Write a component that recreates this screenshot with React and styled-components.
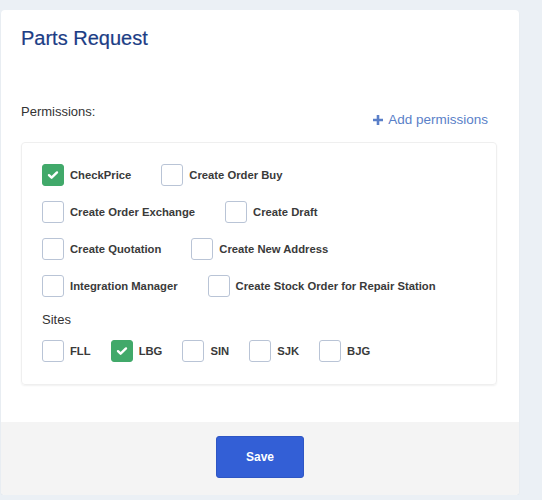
import React, { useState } from "react";
import styled, { createGlobalStyle } from "styled-components";

const GlobalStyle = createGlobalStyle`
    body {
        margin: 0;
        background-color: #ebf0f5;
        font-family: "Liberation Sans", Arial, sans-serif;
    }
`;

const Pagina = styled.div`
    padding: 10px 0 0 1px;
`;

const Cartao = styled.div`
    width: 518px;
    height: 485px;
    background-color: white;
    border-radius: 4px;
    display: flex;
    flex-direction: column;
    box-shadow: 0 1px 2px rgba(0, 0, 0, 0.06);
    overflow: hidden;
`;

const Cabecalho = styled.div`
    padding: 17px 20px 0;
`;

const Titulo = styled.h2`
    margin: 0;
    font-size: 20px;
    line-height: 23px;
    font-weight: 400;
    color: #1b3d85;
    -webkit-text-stroke: 0.2px #1b3d85;
`;

const Corpo = styled.div`
    padding: 54px 22px 0 20px;
`;

const LinhaPermissoes = styled.div`
    display: flex;
    justify-content: space-between;
    align-items: flex-start;
`;

const Rotulo = styled.div`
    font-size: 13px;
    line-height: 15px;
    color: #333;
    margin-top: ${(p) => p.$top || 0}px;
`;

const BotaoAdicionar = styled.button`
    display: flex;
    align-items: center;
    gap: 5px;
    margin-top: 8px;
    margin-right: 9px;
    padding: 0;
    border: none;
    background: transparent;
    font-family: inherit;
    font-size: 13.5px;
    line-height: 16px;
    color: #5a7fc8;
    cursor: pointer;
`;

const Caixa = styled.div`
    margin-top: 14px;
    border: 1px solid #efefef;
    border-radius: 4px;
    box-shadow: 0 1px 2px rgba(0, 0, 0, 0.06);
    padding: 21px 20px 22px;
`;

const Linhas = styled.div`
    display: flex;
    flex-direction: column;
    gap: 15px;
`;

const Linha = styled.div`
    display: flex;
    align-items: center;
    gap: ${(p) => p.$gap}px;
    margin-top: ${(p) => p.$top || 0}px;
`;

const Opcao = styled.label`
    display: flex;
    align-items: center;
    gap: 6px;
    font-size: 11.25px;
    font-weight: 700;
    color: #3a3a3a;
    cursor: pointer;
`;

const Quadrado = styled.span`
    width: 22px;
    height: 22px;
    box-sizing: border-box;
    border-radius: 3px;
    border: 1px solid ${(p) => (p.$marcado ? "#41a96a" : "#b9c4d6")};
    background-color: ${(p) => (p.$marcado ? "#41a96a" : "white")};
    display: flex;
    align-items: center;
    justify-content: center;
`;

const Rodape = styled.div`
    margin-top: auto;
    height: 73px;
    box-sizing: border-box;
    background-color: #f4f4f4;
    padding-top: 14px;
    display: flex;
    justify-content: center;
    align-items: flex-start;
`;

const BotaoSalvar = styled.button`
    width: 88px;
    height: 42px;
    border: 1px solid #2e56c4;
    border-radius: 3px;
    background-color: #335fd6;
    color: white;
    font-family: inherit;
    font-size: 12px;
    font-weight: 700;
    cursor: pointer;
`;

const Check = ({ marcado, onClick, texto }) => (
    <Opcao onClick={onClick}>
        <Quadrado $marcado={marcado}>
            {marcado && (
                <svg width="12" height="12" viewBox="0 0 12 12">
                    <path d="M2 6.2l2.6 2.5L10 3.4" fill="none" stroke="white" strokeWidth="2.4" strokeLinecap="round" strokeLinejoin="round" />
                </svg>
            )}
        </Quadrado>
        {texto}
    </Opcao>
);

const linhasPermissoes = [
    ["CheckPrice", "Create Order Buy"],
    ["Create Order Exchange", "Create Draft"],
    ["Create Quotation", "Create New Address"],
    ["Integration Manager", "Create Stock Order for Repair Station"],
];

const sites = ["FLL", "LBG", "SIN", "SJK", "BJG"];

const App = () => {
    const [marcados, setMarcados] = useState({ CheckPrice: true, LBG: true });

    const alternar = (chave) => {
        setMarcados({ ...marcados, [chave]: !marcados[chave] });
    };

    return (
        <Pagina>
            <GlobalStyle />
            <Cartao>
                <Cabecalho>
                    <Titulo>Parts Request</Titulo>
                </Cabecalho>
                <Corpo>
                    <LinhaPermissoes>
                        <Rotulo>Permissions:</Rotulo>
                        <BotaoAdicionar type="button">
                            <svg width="10" height="10" viewBox="0 0 10 10">
                                <path d="M5 0v10M0 5h10" stroke="#5a7fc8" strokeWidth="2.6" />
                            </svg>
                            Add permissions
                        </BotaoAdicionar>
                    </LinhaPermissoes>
                    <Caixa>
                        <Linhas>
                            {linhasPermissoes.map((linha) => (
                                <Linha key={linha[0]} $gap={30}>
                                    {linha.map((p) => (
                                        <Check key={p} texto={p} marcado={!!marcados[p]} onClick={(e) => { e.preventDefault(); alternar(p); }} />
                                    ))}
                                </Linha>
                            ))}
                        </Linhas>
                        <Rotulo $top={15}>Sites</Rotulo>
                        <Linha $gap={20} $top={13}>
                            {sites.map((s) => (
                                <Check key={s} texto={s} marcado={!!marcados[s]} onClick={(e) => { e.preventDefault(); alternar(s); }} />
                            ))}
                        </Linha>
                    </Caixa>
                </Corpo>
                <Rodape>
                    <BotaoSalvar type="button">Save</BotaoSalvar>
                </Rodape>
            </Cartao>
        </Pagina>
    );
};

export default App;
